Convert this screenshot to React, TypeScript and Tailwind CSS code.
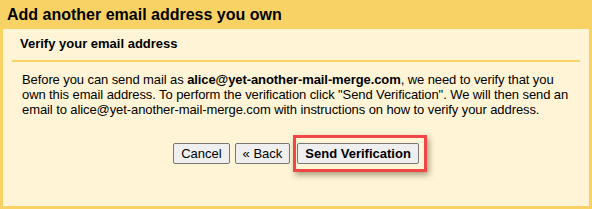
import React from "react";

export default function App() {
  return (
    <div
      className="w-[592px] h-[209px] bg-[#f9d266] px-[3px] pb-[3px] flex flex-col text-black"
      style={{ fontFamily: '"Liberation Sans", Arial, sans-serif' }}
    >
      <div className="h-[29px] pt-[1px] pl-[4px] text-[16px] font-bold leading-[28px] whitespace-nowrap">
        Add another email address you own
      </div>
      <div className="flex-1 bg-[#fff5d6] px-[9px] flex flex-col">
        <div className="pt-[7px] pb-[9px] pl-[8px] text-[13px] font-bold leading-[15px] border-b-2 border-[#f9d266]">
          Verify your email address
        </div>
        <p className="mt-[10px] pl-[10px] text-[13px] leading-[15px] tracking-[-0.09px] whitespace-nowrap">
          Before you can send mail as <b>alice@yet-another-mail-merge.com</b>, we need to verify that you
          <br />
          own this email address. To perform the verification click "Send Verification". We will then send an
          <br />
          email to alice@yet-another-mail-merge.com with instructions on how to verify your address.
        </p>
        <div className="mt-[26px] flex justify-center text-[13px]">
          <button className="h-[21px] px-[7px] border border-[#767676] rounded-[2px] bg-[#efefef] leading-[19px]">
            Cancel
          </button>
          <button className="ml-[5px] h-[21px] px-[7px] border border-[#767676] rounded-[2px] bg-[#efefef] leading-[19px]">
            « Back
          </button>
          <div className="relative ml-[7px]">
            <button className="h-[21px] px-[7px] border border-[#767676] rounded-[2px] bg-[#efefef] leading-[19px] font-bold">
              Send Verification
            </button>
            <div className="absolute -left-[4px] -right-[8px] -top-[8px] -bottom-[8px] border-[3px] border-[#f14646] shadow-[2px_3px_6px_rgba(60,50,20,0.45)] pointer-events-none" />
          </div>
        </div>
      </div>
    </div>
  );
}
